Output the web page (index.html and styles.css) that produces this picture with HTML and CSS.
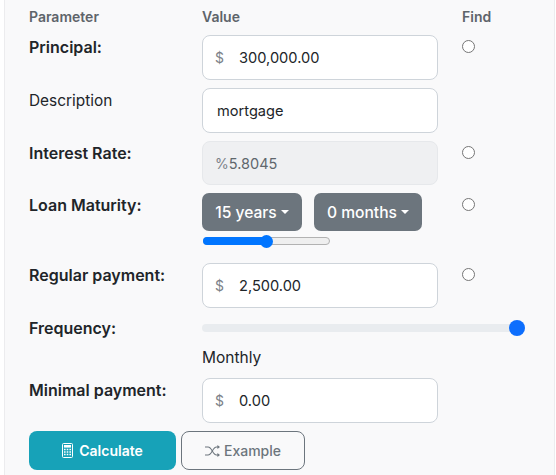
FILE: index.html
```html
<!DOCTYPE html>
<html lang="en">
<head>
<meta charset="utf-8">
<title>Loan calculator</title>
<link rel="stylesheet" href="styles.css">
</head>
<body>
<main class="panel">
  <div class="row head-row">
    <div class="head">Parameter</div>
    <div class="head">Value</div>
    <div class="head">Find</div>
  </div>
  <div class="row r-principal">
    <label class="label">Principal:</label>
    <div class="field"><span class="prefix">$</span><input class="control" value="300,000.00"></div>
    <input class="radio" type="radio" name="find">
  </div>
  <div class="row r-desc">
    <label class="label plain">Description</label>
    <div class="field"><input class="control text" value="mortgage"></div>
    <span></span>
  </div>
  <div class="row r-rate">
    <label class="label">Interest Rate:</label>
    <div class="field disabled"><span class="prefix tight">%</span><span class="readonly">5.8045</span></div>
    <input class="radio" type="radio" name="find">
  </div>
  <div class="row r-loan">
    <label class="label">Loan Maturity:</label>
    <div class="value-stack">
      <div class="btn-pair">
        <button class="drop wide">15 years<i class="caret"></i></button>
        <button class="drop">0 months<i class="caret"></i></button>
      </div>
      <div class="mini-slider"><div class="mini-fill"></div><div class="mini-thumb"></div></div>
    </div>
    <input class="radio" type="radio" name="find">
  </div>
  <div class="row r-regular">
    <label class="label">Regular payment:</label>
    <div class="field"><span class="prefix">$</span><input class="control" value="2,500.00"></div>
    <input class="radio" type="radio" name="find">
  </div>
  <div class="row r-freq">
    <label class="label freq-label">Frequency:</label>
    <div class="freq-slider"><div class="freq-thumb"></div></div>
  </div>
  <div class="row r-monthly">
    <span></span>
    <div class="monthly">Monthly</div>
    <span></span>
  </div>
  <div class="row r-minimal">
    <label class="label">Minimal payment:</label>
    <div class="field"><span class="prefix">$</span><input class="control" value="0.00"></div>
    <span></span>
  </div>
  <div class="actions">
    <button class="btn calc">
      <svg class="ico" viewBox="0 0 11 15" width="11" height="15" fill="none" stroke="currentColor" aria-hidden="true">
        <rect x="0.5" y="0.5" width="10" height="14" rx="1" stroke-width="1"/>
        <rect x="2" y="2" width="7" height="2.6" fill="currentColor" stroke="none"/>
        <path d="M2 6.5h1.6M4.7 6.5h1.6M7.4 6.5h1.6M2 9h1.6M4.7 9h1.6M7.4 9h1.6M2 11.5h1.6M4.7 11.5h1.6M7.4 11.5h1.6" stroke-width="1.4"/>
      </svg>
      Calculate
    </button>
    <button class="btn example">
      <svg class="ico" viewBox="0 0 15 12" width="15" height="12" fill="none" stroke="currentColor" stroke-width="1.1" aria-hidden="true">
        <path d="M0 2H3C5 2 6 3.6 7.3 6C8.6 8.4 9.6 10 11.6 10H13"/>
        <path d="M0 10H3C5 10 6 8.4 7.3 6C8.6 3.6 9.6 2 11.6 2H13"/>
        <path d="M12.4 0L15 2L12.4 4Z M12.4 8L15 10L12.4 12Z" fill="currentColor" stroke="none"/>
      </svg>
      Example
    </button>
  </div>
</main>
</body>
</html>
```
FILE: styles.css
```css
* { box-sizing: border-box; }
html, body { margin: 0; height: 475px; overflow: hidden; background: #fff; }
body { font-family: Inter, "Liberation Sans", sans-serif; color: #212529; font-size: 16px; }
.panel {
  width: 551px;
  height: 475px;
  margin-left: 4px;
  padding: 9px 0 0 24px;
  background: #f9f9fa;
  border-left: 1px solid #ececee;
  border-right: 1px solid #ececee;
}
.row { display: grid; grid-template-columns: 173px 236px 1fr; column-gap: 0; }
.row > :nth-child(3) { margin-left: 24px; }
.head { font-size: 14px; font-weight: 600; line-height: 16px; color: #5e646a; }
.head-row { height: 26px; }
.label { font-size: 16px; font-weight: 600; line-height: 20px; color: #212529; padding-top: 2px; }
.label.plain { font-weight: 400; font-size: 15.4px; padding-top: 3px; }
.r-desc { margin-top: 8px; }
.r-rate { margin-top: 8px; }
.r-loan { margin-top: 8px; }
.r-regular { margin-top: 18px; }
.r-freq { margin-top: 16px; grid-template-rows: 8px; align-items: center; }
.freq-label { padding-top: 0; }
.r-monthly { margin-top: 16px; height: 20px; }
.r-minimal { margin-top: 10px; }
.field {
  display: flex;
  align-items: center;
  height: 45px;
  padding: 0 12px;
  background: #fff;
  border: 1px solid #ced4da;
  border-radius: 8px;
}
.field.disabled { height: 44px; background: #eff0f2; border-color: #e6e8eb; }
.prefix { width: 24px; flex: none; font-size: 14px; color: #7b8188; }
.prefix.tight { width: auto; font-size: 14px; }
.control {
  flex: 1;
  min-width: 0;
  border: 0;
  outline: 0;
  padding: 0;
  background: transparent;
  font: 400 14.6px Inter, "Liberation Sans", sans-serif;
  color: #212529;
}
.control.text { padding-left: 2px; }
.readonly { font-size: 14.5px; color: #60676d; }
.radio {
  appearance: none;
  width: 13px;
  height: 13px;
  margin: 5px 0 0 24px;
  background: #fff;
  border: 1px solid #767676;
  border-radius: 50%;
}
.value-stack { display: flex; flex-direction: column; }
.btn-pair { display: flex; gap: 12px; }
.drop {
  display: inline-flex;
  align-items: center;
  justify-content: center;
  width: 108px;
  height: 38px;
  padding: 0;
  border: 0;
  border-radius: 7px;
  background: #6c757d;
  color: #fff;
  font: 500 15.6px Inter, "Liberation Sans", sans-serif;
}
.drop.wide { width: 100px; }
.caret {
  margin-left: 4px;
  width: 0;
  height: 0;
  border-top: 4px solid #fff;
  border-left: 4px solid transparent;
  border-right: 4px solid transparent;
}
.mini-slider {
  position: relative;
  width: 127px;
  height: 8px;
  margin: 6px 0 0 1px;
  background: #efefef;
  border: 1px solid #b2b2b2;
  border-radius: 4px;
}
.mini-fill {
  position: absolute;
  left: -1px;
  top: -1px;
  width: 64px;
  height: 8px;
  background: #0075ff;
  border-radius: 4px 0 0 4px;
}
.mini-thumb {
  position: absolute;
  left: 56px;
  top: -3px;
  width: 13px;
  height: 13px;
  background: #0075ff;
  border-radius: 50%;
}
.freq-slider {
  position: relative;
  width: 323px;
  height: 8px;
  background: #e9ecef;
  border-radius: 4px;
  grid-column: 2 / 4;
}
.freq-thumb {
  position: absolute;
  right: 0;
  top: -4px;
  width: 16px;
  height: 16px;
  background: #0d6efd;
  border-radius: 50%;
}
.monthly { font-size: 15.5px; line-height: 20px; color: #212529; }
.actions { display: flex; gap: 5px; margin-top: 8px; }
.btn {
  display: inline-flex;
  align-items: center;
  justify-content: center;
  gap: 6px;
  height: 39px;
  padding: 0;
  border-radius: 8px;
  font: 600 14px Inter, "Liberation Sans", sans-serif;
}
.calc { width: 147px; background: #17a2b8; border: 0; color: #fff; }
.example { width: 124px; gap: 4px; background: transparent; border: 1px solid #6c757d; color: #6c757d; font-weight: 500; }
.ico { flex: none; }
```
